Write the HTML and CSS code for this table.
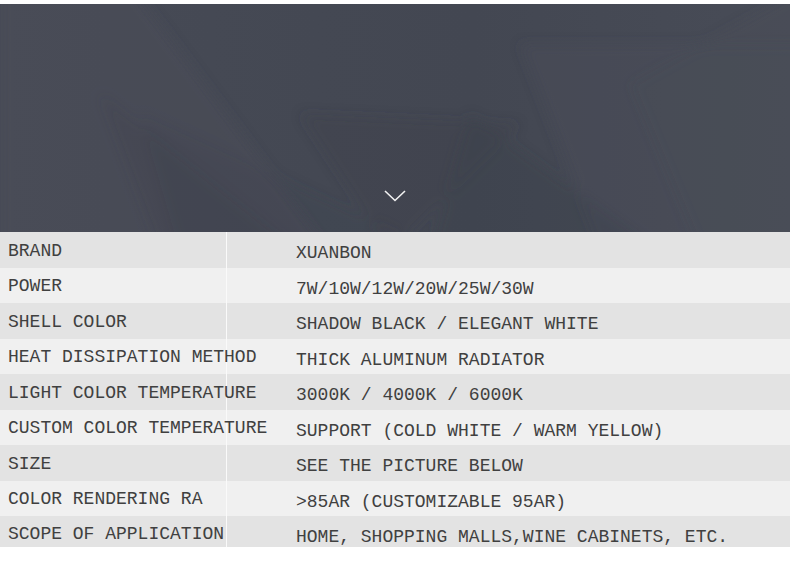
FILE: index.html
```html
<!DOCTYPE html>
<html>
<head>
<meta charset="utf-8">
<link rel="stylesheet" href="styles.css">
</head>
<body>
<div class="page">
  <div class="hero">
    <svg class="bg" viewBox="0 0 790 228" preserveAspectRatio="none" aria-hidden="true">
      <defs>
        <filter id="soft" x="-10%" y="-10%" width="120%" height="120%">
          <feGaussianBlur stdDeviation="6"/>
        </filter>
      </defs>
      <g filter="url(#soft)">
        <polygon points="0,-20 130,-20 330,248 0,248" fill="#4b515d" opacity="0.3"/>
        <polygon points="100,90 300,248 160,248" fill="#3f434d" opacity="0.3"/>
        <polygon points="140,110 440,248 180,248" fill="#3d414b" opacity="0.2"/>
        <polygon points="300,110 520,120 390,248" fill="#3c4049" opacity="0.25"/>
        <polygon points="520,40 810,40 810,248 600,248" fill="#4b505b" opacity="0.25"/>
        <polygon points="470,110 660,248 430,248" fill="#3b3f48" opacity="0.3"/>
        <polygon points="630,80 810,-20 810,248 700,248" fill="#4c515c" opacity="0.2"/>
      </g>
    </svg>
    <svg class="chev" width="22" height="12" viewBox="0 0 22 12" aria-hidden="true">
      <polyline points="1,1 11,10.5 21,1" fill="none" stroke="#f2f2f2" stroke-width="1.6"/>
    </svg>
  </div>
  <div class="table">
    <div class="row"><div class="k">BRAND</div><div class="v">XUANBON</div></div>
    <div class="row"><div class="k">POWER</div><div class="v">7W/10W/12W/20W/25W/30W</div></div>
    <div class="row"><div class="k">SHELL COLOR</div><div class="v">SHADOW BLACK / ELEGANT WHITE</div></div>
    <div class="row"><div class="k">HEAT DISSIPATION METHOD</div><div class="v">THICK ALUMINUM RADIATOR</div></div>
    <div class="row"><div class="k">LIGHT COLOR TEMPERATURE</div><div class="v">3000K / 4000K / 6000K</div></div>
    <div class="row"><div class="k">CUSTOM COLOR TEMPERATURE</div><div class="v">SUPPORT (COLD WHITE / WARM YELLOW)</div></div>
    <div class="row"><div class="k">SIZE</div><div class="v">SEE THE PICTURE BELOW</div></div>
    <div class="row"><div class="k">COLOR RENDERING RA</div><div class="v">&gt;85AR (CUSTOMIZABLE 95AR)</div></div>
    <div class="row last"><div class="k">SCOPE OF APPLICATION</div><div class="v">HOME, SHOPPING MALLS,WINE CABINETS, ETC.</div></div>
  </div>
</div>
</body>
</html>
```

FILE: styles.css
```css
html, body {
  margin: 0;
  padding: 0;
  background: #ffffff;
}
.page {
  width: 790px;
  padding-top: 4px;
}
.hero {
  position: relative;
  height: 228px;
  background: linear-gradient(90deg, #474b56 0%, #444853 40%, #434752 60%, #484c57 100%);
  overflow: hidden;
}
.hero .bg {
  position: absolute;
  left: 0;
  top: 0;
  width: 100%;
  height: 100%;
}
.hero .chev {
  position: absolute;
  left: 384px;
  top: 186px;
}
.table {
  display: flex;
  flex-direction: column;
  font-family: "Liberation Mono", "DejaVu Sans Mono", monospace;
  font-size: 18px;
  color: #404040;
}
.row {
  display: flex;
  height: 35.5px;
  background: #e3e3e3;
}
.row:nth-child(even) {
  background: #f0f0f0;
}
.row.last {
  height: 31px;
}
.k {
  width: 218px;
  padding-left: 8px;
  border-right: 1px solid #fafafa;
  display: flex;
  align-items: center;
  white-space: nowrap;
  padding-top: 2px;
}
.v {
  padding-left: 69px;
  display: flex;
  align-items: center;
  white-space: nowrap;
  padding-top: 7px;
}
.row.last .k {
  padding-top: 4px;
}
.row.last .v {
  padding-top: 10px;
}
```
